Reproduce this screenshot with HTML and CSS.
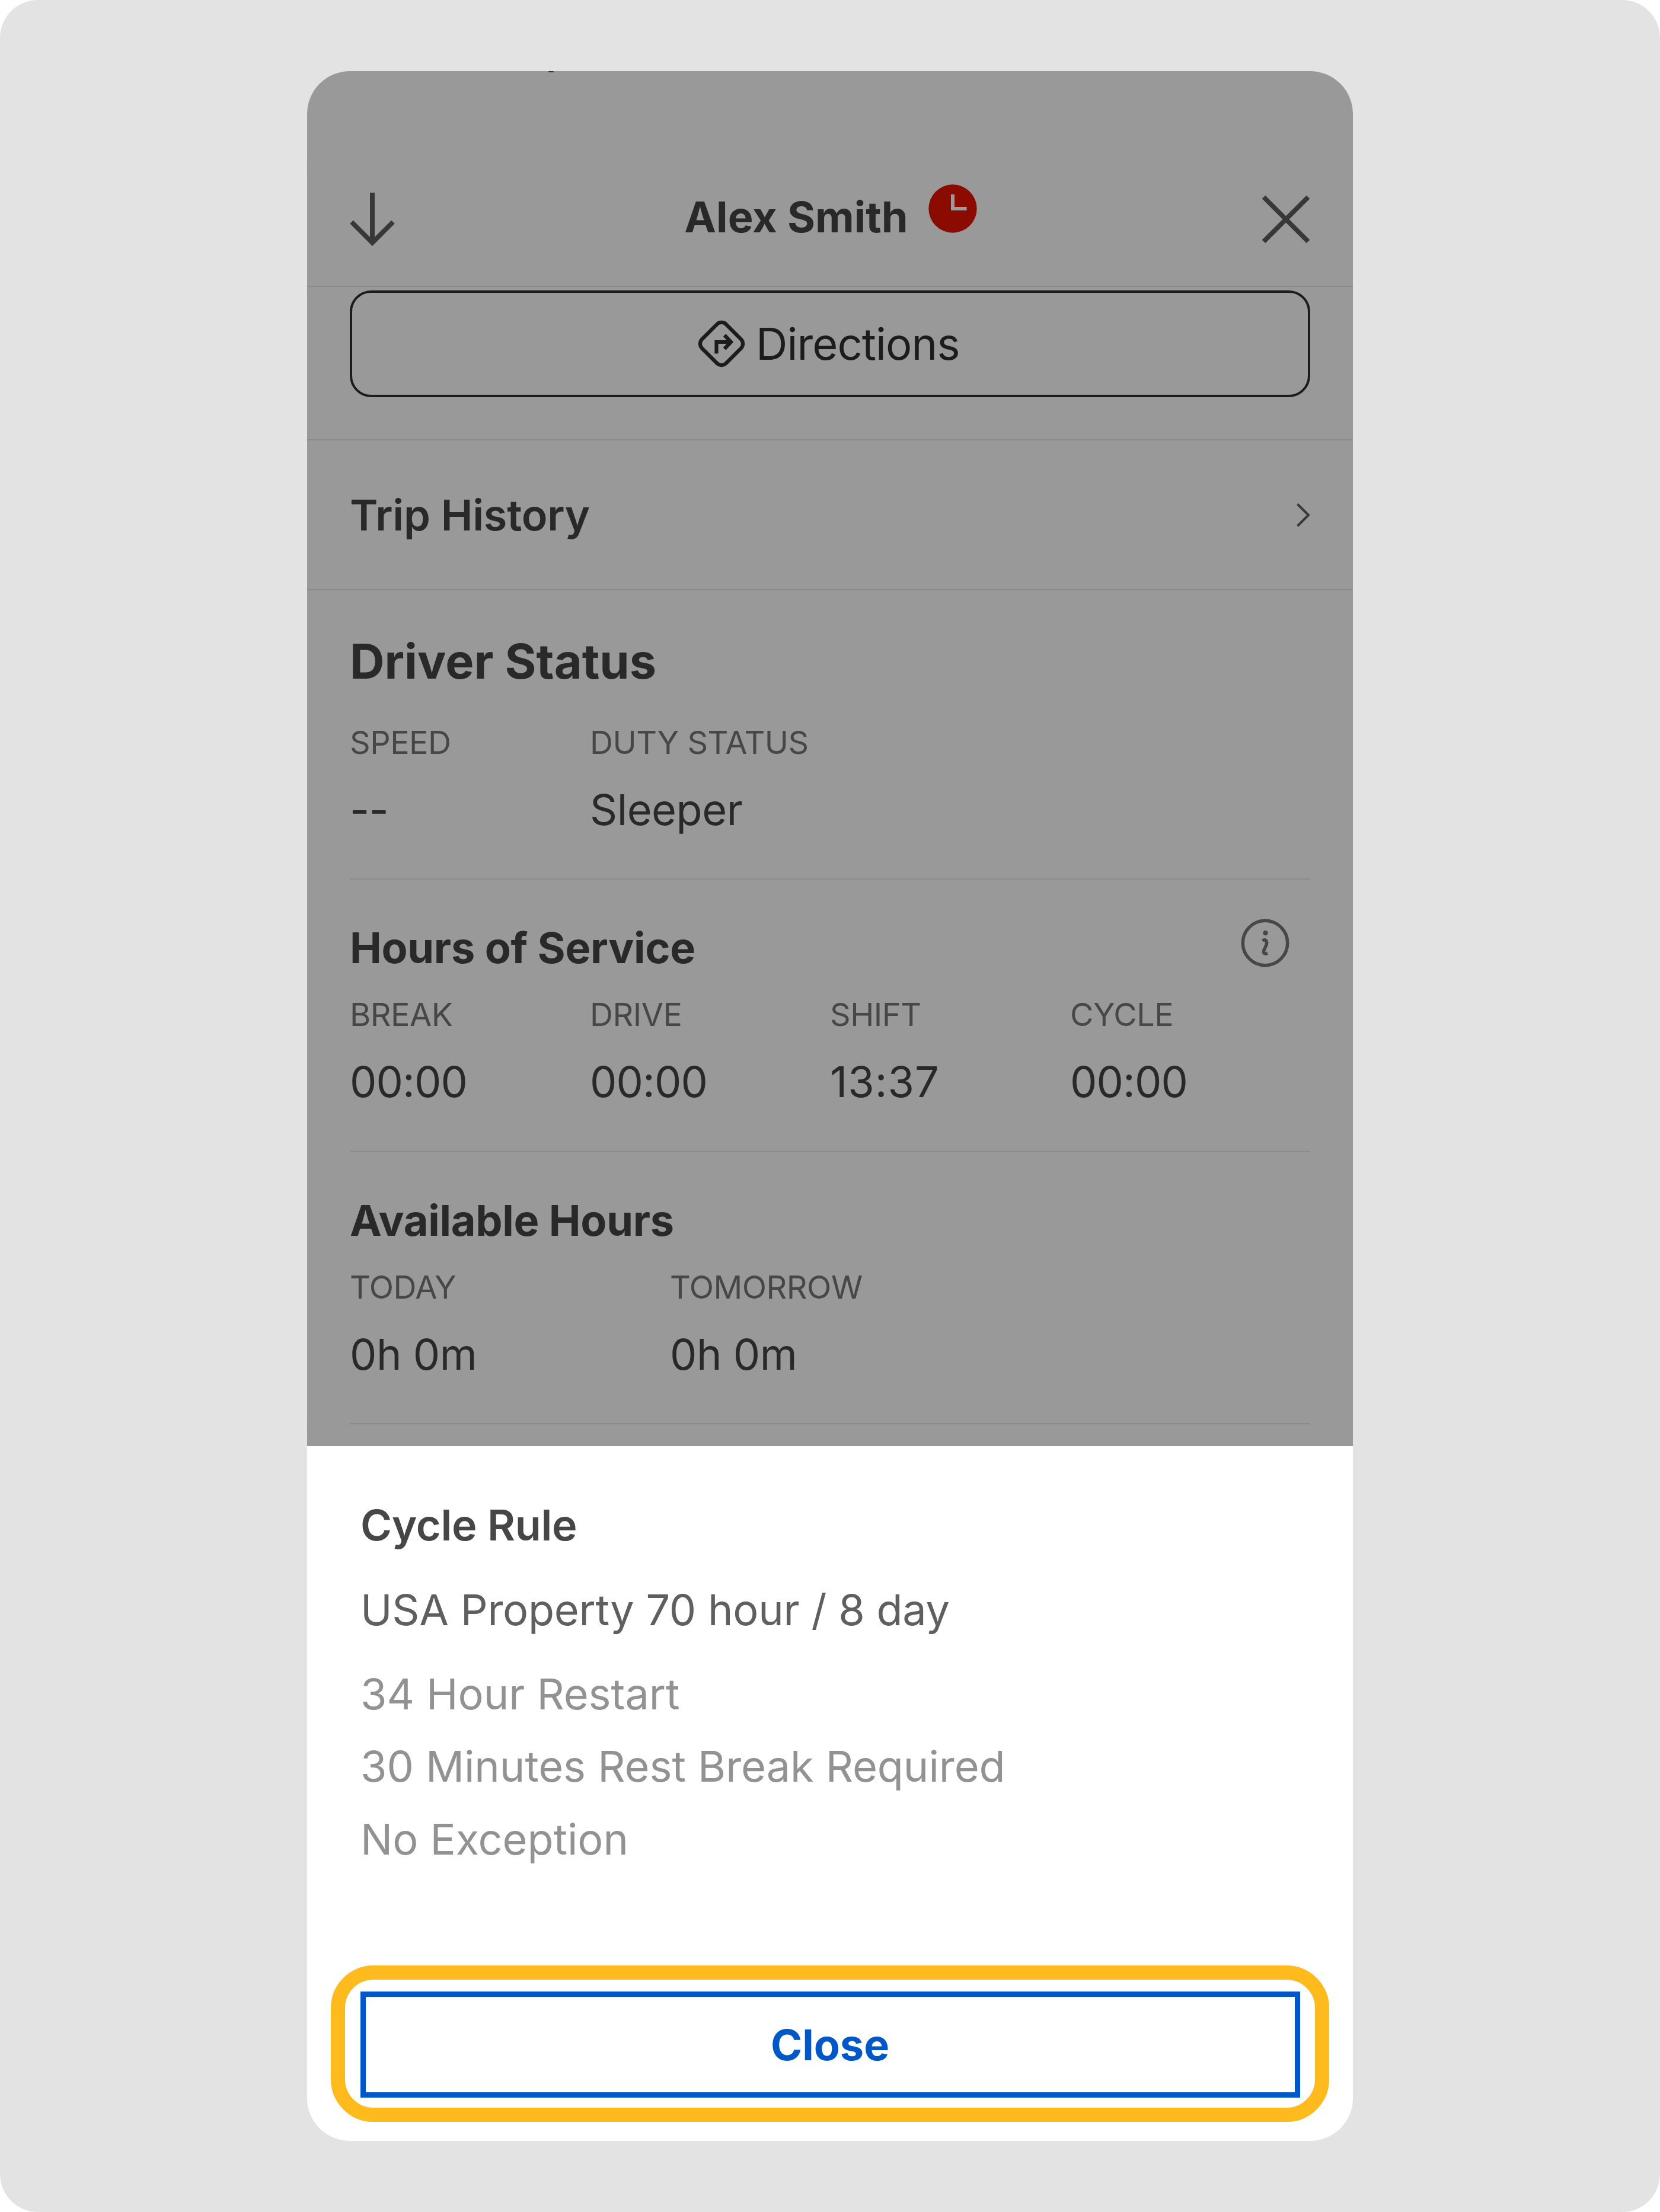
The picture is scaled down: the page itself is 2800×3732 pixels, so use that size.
FILE: index.html
```html
<!DOCTYPE html>
<html lang="en">
  <head>
    <meta charset="UTF-8" />
    <meta name="viewport" content="width=device-width, initial-scale=1.0" />
    <title>Alex Smith</title>
    <link rel="stylesheet" href="styles.css">
  </head>

  <body>
    <main class="phone">
      <div class="dimmed">
        <div class="panel">
          <header class="topbar">
            <svg class="arrow" viewBox="0 0 76 90">
              <path d="M38 0V82M3 49.5l35 35 35-35" />
            </svg>
            <div class="title">
              <h1>Alex Smith</h1>
              <svg class="clock" viewBox="0 0 82 82">
                <circle cx="41" cy="41" r="40.7" />
                <path d="M41 17v24h23.500" />
              </svg>
            </div>
            <svg class="cross" viewBox="0 0 82 82">
              <path d="M3.500 3.500l75 75M78.500 3.500l-75 75" />
            </svg>
          </header>

          <div class="directions-wrap">
            <button class="directions">
              <svg viewBox="0 0 80 80">
                <rect x="11.300" y="11.300" width="57.400" height="57.400" rx="11" transform="rotate(45 40 40)" />
                <path d="M31.500 56.500V37H55M45 25.500L56 37 45 48.500" />
              </svg>
              <span>Directions</span>
            </button>
          </div>

          <div class="trip">
            <h3>Trip History</h3>
            <svg viewBox="0 0 24 42">
              <path d="M2.500 2.500L21 21 2.500 39.500" />
            </svg>
          </div>

          <section class="status">
            <h2>Driver Status</h2>
            <dl class="cols four">
              <div><dt>SPEED</dt><dd>--</dd></div>
              <div><dt>DUTY STATUS</dt><dd>Sleeper</dd></div>
            </dl>
          </section>

          <section class="block">
            <div class="heading">
              <h3>Hours of Service</h3>
              <svg class="info" viewBox="0 0 82 82">
                <circle class="ring" cx="41" cy="41" r="37.700" />
                <circle class="dot" cx="41.500" cy="24" r="4.300" />
                <path d="M36.500 37C40.500 34.500 44.500 36.500 43.500 42.500C42.500 48 38.500 50.500 38.500 55.500C38.500 59 41.500 60 45 58" />
              </svg>
            </div>
            <dl class="cols four times">
              <div><dt>BREAK</dt><dd>00:00</dd></div>
              <div><dt>DRIVE</dt><dd>00:00</dd></div>
              <div><dt>SHIFT</dt><dd class="shift">13:37</dd></div>
              <div><dt>CYCLE</dt><dd>00:00</dd></div>
            </dl>
          </section>

          <section class="block">
            <div class="heading">
              <h3>Available Hours</h3>
            </div>
            <dl class="cols three">
              <div><dt>TODAY</dt><dd>0h 0m</dd></div>
              <div><dt>TOMORROW</dt><dd>0h 0m</dd></div>
            </dl>
          </section>
        </div>
      </div>

      <aside class="sheet">
        <h4>Cycle Rule</h4>
        <p class="rule">USA Property 70 hour / 8 day</p>
        <ul>
          <li>34 Hour Restart</li>
          <li>30 Minutes Rest Break Required</li>
          <li>No Exception</li>
        </ul>
        <div class="highlight">
          <button class="close">Close</button>
        </div>
      </aside>
    </main>
  </body>
</html>
```
FILE: styles.css
```css
* {
  box-sizing: border-box;
  margin: 0;
  padding: 0;
}

html {
  background-color: white;
}

body {
  width: 2800px;
  height: 3732px;
  padding-top: 120px;
  border-radius: 64px;
  background-color: #e3e3e3;
  font-family: Inter, sans-serif;
  font-size: 72px;
  line-height: 96px;
  color: #292929;
}

svg {
  display: block;
  fill: none;
}

button {
  font: inherit;
  background: none;
}

.phone {
  position: relative;
  width: 1764px;
  height: 3492px;
  margin: 0 auto;
  border-radius: 72px;
  overflow: hidden;
  background-color: white;
}

.dimmed {
  height: 2319.5px;
  padding-top: 102px;
  overflow: hidden;
  background-color: #999999;
}

/* tail of a letter scrolled out of view */
.dimmed::before {
  content: "";
  position: absolute;
  top: 0;
  left: 407px;
  width: 9px;
  height: 2px;
  border-radius: 0 0 5px 5px;
  background-color: #333333;
}

.panel {
  border-radius: 72px 72px 0 0;
  box-shadow: 0 0 2px #939393;
}

.topbar {
  display: grid;
  grid-template-columns: 1fr auto 1fr;
  align-items: center;
  height: 262px;
  padding: 36px 72px 0;
  border-bottom: 2px solid #8b8b8b;
}

.arrow,
.cross {
  stroke: #383838;
  stroke-width: 8;
}

.arrow {
  width: 76px;
  height: 90px;
}

.cross {
  width: 82px;
  height: 82px;
  justify-self: end;
}

.title {
  display: flex;
  gap: 34px;
  margin-top: -8px;
  padding-left: 2px;
}

h1 {
  font-size: 72px;
  font-weight: 700;
}

.clock {
  width: 82px;
  height: 82px;
  margin-top: -7px;
}

.clock circle {
  fill: #8c0b00;
}

.clock path {
  stroke: #a09a98;
  stroke-width: 6;
}

.directions-wrap {
  padding: 6px 72px 71px;
  border-bottom: 2px solid #8b8b8b;
}

.directions {
  display: flex;
  align-items: center;
  justify-content: center;
  gap: 17.5px;
  width: 100%;
  height: 180px;
  padding-right: 4px;
  border: 4px solid #1c1c1c;
  border-radius: 36px;
  font-size: 74px;
  letter-spacing: -0.9px;
  color: #1c1c1c;
}

.directions svg {
  width: 80px;
  height: 80px;
  stroke: #1c1c1c;
  stroke-width: 6.2;
}

.trip {
  display: flex;
  align-items: center;
  justify-content: space-between;
  height: 253px;
  padding: 0 72px;
  border-bottom: 2px solid #8b8b8b;
}

.trip svg {
  width: 24px;
  height: 42px;
  stroke: #383838;
  stroke-width: 4;
}

h3 {
  font-size: 72px;
  font-weight: 600;
  letter-spacing: -0.2px;
}

h2 {
  font-size: 81px;
  line-height: 98px;
  font-weight: 700;
}

.status,
.block {
  margin: 0 72px;
  padding-bottom: 68.5px;
  border-bottom: 2px solid #8b8b8b;
}

.status {
  padding-top: 70.5px;
}

.block {
  padding-top: 67px;
}

.status .cols {
  margin-top: 56px;
}

.block .cols {
  margin-top: 33px;
}

.heading {
  display: flex;
  justify-content: space-between;
  height: 96px;
}

.heading h3 {
  font-weight: 700;
  letter-spacing: -0.3px;
}

.info {
  width: 82px;
  height: 82px;
  margin: -1px 35px 0 0;
  stroke: #474747;
  stroke-width: 5.5;
}

.info .dot {
  fill: #474747;
  stroke: none;
}

.cols {
  display: grid;
}

.four {
  grid-template-columns: repeat(4, 1fr);
}

.three {
  grid-template-columns: repeat(3, 1fr);
}

dt {
  margin-bottom: 33px;
  font-size: 54px;
  line-height: 64px;
  letter-spacing: -0.5px;
  color: #474747;
}

dd {
  letter-spacing: -0.5px;
}

.times dd {
  letter-spacing: -0.9px;
}

.times .shift {
  letter-spacing: 1px;
}

.sheet {
  padding-top: 85.5px;
}

.sheet h4,
.sheet p,
.sheet ul {
  margin-left: 90px;
}

h4 {
  font-size: 72px;
  font-weight: 600;
  letter-spacing: -0.3px;
  color: #464646;
}

.rule {
  margin-top: 47px;
  letter-spacing: -0.25px;
  color: #5f5f5f;
}

.sheet ul {
  margin-top: 32.5px;
  list-style: none;
  line-height: 122.7px;
  letter-spacing: -0.05px;
  color: #929292;
}

.highlight {
  height: 264px;
  margin: 151.5px 40px 0;
  padding: 19.5px 25.5px 17px;
  border: 24px solid #ffbb1e;
  border-radius: 72px;
}

.close {
  display: block;
  width: 100%;
  height: 100%;
  padding-top: 2px;
  border: 9px solid #0057c8;
  font-weight: 700;
  color: #0057c8;
}
```
